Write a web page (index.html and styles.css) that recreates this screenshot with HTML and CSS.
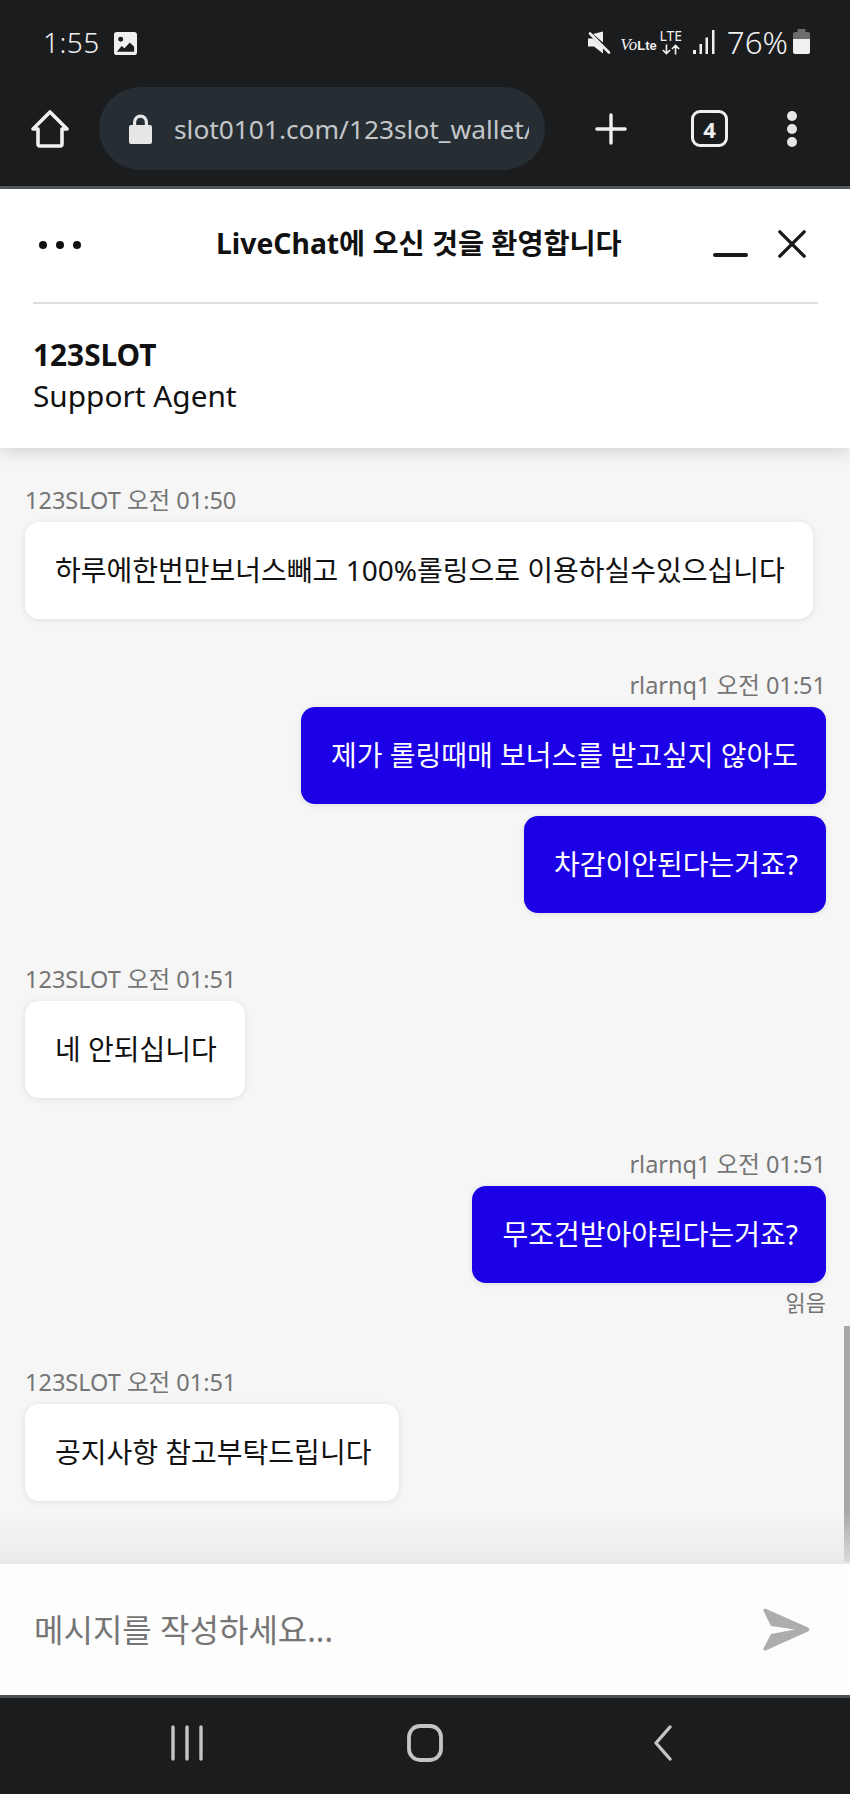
FILE: index.html

```html
<!DOCTYPE html>
<html lang="ko">
<head>
    <meta charset="UTF-8">
    <meta name="viewport" content="width=device-width, initial-scale=1.0">
    <title>LiveChat</title>
    <link rel="stylesheet" href="styles.css">
</head>
<body>
<div class="phone">
    <div class="browser">
        <div class="status-bar">
            <div class="status-left">
                <span class="clock">1:55</span>
                <svg class="icon-picture" viewBox="0 0 24 24"><path fill="#f0f0f0" fill-rule="evenodd" d="M3 0h18a3 3 0 0 1 3 3v18a3 3 0 0 1-3 3H3a3 3 0 0 1-3-3V3a3 3 0 0 1 3-3zM7 5a2.600 2.600 0 1 0 0 5.200A2.600 2.600 0 0 0 7 5zM3 20.500h18v-5l-4.500-4.500-5.500 6-3-2.500z"/></svg>
            </div>
            <div class="status-right">
                <svg class="icon-mute" viewBox="0 0 24 24"><path fill="#f0f0f0" d="M16 1v11L6 3.500 16 1zM1 8h5l10 9v6l-9-7H1z"/><path stroke="#f0f0f0" stroke-width="2.600" stroke-linecap="round" d="M3 3l19 19"/></svg>
                <span class="volte"><i>Vo</i><b>Lte</b></span>
                <span class="lte">
                    <span>LTE</span>
                    <svg viewBox="0 0 22 11"><path fill="none" stroke="#f0f0f0" stroke-width="1.800" d="M6 0v10M2 6l4 4 4-4M16 11V1M12 5l4-4 4 4"/></svg>
                </span>
                <svg class="icon-signal" viewBox="0 0 22 24"><path fill="#f0f0f0" d="M0 20h3v4H0zM6.500 14h2.500v10H6.500zM12.500 7.500H15V24h-2.500zM19 0h2.500v24H19z"/></svg>
                <span class="battery-text">76%</span>
                <svg class="icon-battery" viewBox="0 0 17 25"><path fill="#6d6d6d" d="M5.500 0h6a1 1 0 0 1 1 1v2H15a2 2 0 0 1 2 2v5H0V5a2 2 0 0 1 2-2h2.500V1a1 1 0 0 1 1-1z"/><path fill="#f0f0f0" d="M0 10h17v13a2 2 0 0 1-2 2H2a2 2 0 0 1-2-2z"/></svg>
            </div>
        </div>
        <div class="toolbar">
            <svg class="icon-home" viewBox="0 0 38 38"><path fill="none" stroke="#f0f0f0" stroke-width="3.600" stroke-linejoin="round" d="M2 19L19 2l17 17h-5v15a2 2 0 0 1-2 2H9a2 2 0 0 1-2-2V19z"/></svg>
            <div class="address">
                <svg class="icon-lock" viewBox="0 0 23 30"><path fill="#e6e6e6" d="M4 11V8a7.500 7.500 0 0 1 15 0v3h2a2 2 0 0 1 2 2v15a2 2 0 0 1-2 2H2a2 2 0 0 1-2-2V13a2 2 0 0 1 2-2zm3.200 0h8.600V8a4.300 4.300 0 0 0-8.600 0z"/></svg>
                <span class="url">slot0101.com/123slot_wallet/</span>
            </div>
            <svg class="icon-plus" viewBox="0 0 34 34"><path stroke="#f0f0f0" stroke-width="3.600" stroke-linecap="round" d="M17 2v30M2 17h30"/></svg>
            <span class="tabs">4</span>
            <div class="more-dots"><i></i><i></i><i></i></div>
        </div>
    </div>

    <div class="chat-header">
        <div class="title-row">
            <div class="menu-dots"><i></i><i></i><i></i></div>
            <h1>LiveChat에 오신 것을 환영합니다</h1>
            <div class="window-btns">
                <span class="minimize"></span>
                <svg class="icon-close" viewBox="0 0 30 30"><path stroke="#1a1a1a" stroke-width="3.600" stroke-linecap="round" d="M2 2l26 26M28 2L2 28"/></svg>
            </div>
        </div>
        <div class="agent">
            <strong>123SLOT</strong>
            <span>Support Agent</span>
        </div>
    </div>

    <div class="messages">
        <div class="group">
            <div class="meta">123SLOT 오전 01:50</div>
            <div class="bubble">하루에한번만보너스빼고 100%롤링으로 이용하실수있으십니다</div>
        </div>
        <div class="group mine">
            <div class="meta">rlarnq1 오전 01:51</div>
            <div class="bubble">제가 롤링때매 보너스를 받고싶지 않아도</div>
            <div class="bubble">차감이안된다는거죠?</div>
        </div>
        <div class="group">
            <div class="meta">123SLOT 오전 01:51</div>
            <div class="bubble">네 안되십니다</div>
        </div>
        <div class="group mine">
            <div class="meta">rlarnq1 오전 01:51</div>
            <div class="bubble">무조건받아야된다는거죠?</div>
            <div class="read">읽음</div>
        </div>
        <div class="group">
            <div class="meta">123SLOT 오전 01:51</div>
            <div class="bubble">공지사항 참고부탁드립니다</div>
        </div>
        <div class="scrollbar"></div>
        <div class="fade"></div>
    </div>

    <div class="composer">
        <span class="placeholder">메시지를 작성하세요...</span>
        <svg class="icon-send" viewBox="0 0 48 44"><path fill="#adadad" d="M1.500 3c-.6-1.500.8-2.800 2.200-2.200L46 19.500c1.800.8 1.800 3.200 0 4L3.700 42.500c-1.400.6-2.800-.7-2.200-2.200L9 26l24-4.500L9 18z"/></svg>
    </div>

    <div class="nav-bar">
        <svg class="icon-recent" viewBox="0 0 32 36"><path stroke="#c4c4c4" stroke-width="3.400" stroke-linecap="round" d="M2 2v32M16 2v32M30 2v32"/></svg>
        <svg class="icon-circle" viewBox="0 0 36 38"><rect x="2" y="2" width="32" height="34" rx="11" fill="none" stroke="#c4c4c4" stroke-width="3.800"/></svg>
        <svg class="icon-back" viewBox="0 0 20 36"><path fill="none" stroke="#c4c4c4" stroke-width="3.400" stroke-linecap="round" stroke-linejoin="round" d="M17 2L3 18l14 16"/></svg>
    </div>
</div>
</body>
</html>
```

FILE: styles.css

```css
* {
    box-sizing: border-box;
}

html, body {
    margin: 0;
    padding: 0;
}

body {
    font-family: "Noto Sans", "Noto Sans CJK KR", sans-serif;
    background-color: #f6f6f6;
    color: #111;
}

.phone {
    width: 850px;
    height: 1794px;
    display: flex;
    flex-direction: column;
    overflow: hidden;
}

/* browser chrome */
.browser {
    height: 189px;
    flex: none;
    background-color: #1b1c1e;
    border-bottom: 3px solid #555a5e;
    color: #f0f0f0;
}

.status-bar {
    height: 87px;
    padding: 24px 40px 0 43px;
    display: flex;
    justify-content: space-between;
}

.status-left, .status-right {
    display: flex;
    align-items: flex-start;
}

.clock {
    font-size: 28px;
    line-height: 36px;
    font-weight: 300;
    letter-spacing: 0.5px;
}

.icon-picture {
    width: 23px;
    height: 23px;
    margin: 8px 0 0 14px;
}

.icon-mute {
    width: 24px;
    height: 25px;
    margin-top: 6px;
}

.volte {
    margin: 12px 0 0 9px;
    font-size: 17px;
    line-height: 18px;
    display: flex;
    align-items: baseline;
    font-family: "Liberation Serif", serif;
}

.volte b {
    font-family: "Liberation Sans", sans-serif;
    font-size: 13px;
}

.lte {
    margin: 5px 0 0 2px;
    width: 24px;
    display: flex;
    flex-direction: column;
    align-items: center;
    font-size: 14px;
    line-height: 14px;
}

.lte svg {
    width: 20px;
    height: 11px;
    margin-top: 1px;
}

.icon-signal {
    width: 22px;
    height: 24px;
    margin: 6px 0 0 10px;
}

.battery-text {
    margin-left: 12px;
    font-size: 31.300px;
    line-height: 36px;
    font-weight: 300;
}

.icon-battery {
    width: 17px;
    height: 25px;
    margin: 5px 0 0 5px;
}

.toolbar {
    height: 99px;
    padding: 0 0 16px 31px;
    display: flex;
    align-items: center;
}

.icon-home {
    width: 38px;
    height: 38px;
    flex: none;
}

.address {
    margin-left: 30px;
    width: 446px;
    height: 83px;
    background-color: #262e34;
    border-radius: 42px;
    padding: 0 16px 0 30px;
    display: flex;
    align-items: center;
    overflow: hidden;
}

.icon-lock {
    width: 23px;
    height: 30px;
    flex: none;
}

.url {
    margin-left: 22px;
    font-size: 26.3px;
    color: #c3c7ca;
    white-space: nowrap;
    overflow: hidden;
}

.icon-plus {
    width: 32px;
    height: 32px;
    margin-left: 50px;
    flex: none;
}

.tabs {
    width: 37px;
    height: 37px;
    margin-left: 64px;
    flex: none;
    border: 3px solid #f0f0f0;
    border-radius: 9px;
    font-size: 22px;
    font-weight: 700;
    display: flex;
    align-items: center;
    justify-content: center;
}

.more-dots {
    margin-left: 59px;
    display: flex;
    flex-direction: column;
    gap: 3px;
}

.more-dots i {
    width: 10px;
    height: 10px;
    border-radius: 50%;
    background-color: #e6e6e6;
}

/* chat header */
.chat-header {
    height: 259px;
    flex: none;
    padding: 0 32px 0 33px;
    background-color: #fff;
    box-shadow: 0 4px 16px rgba(0, 0, 0, 0.14);
    position: relative;
    z-index: 2;
}

.title-row {
    height: 115px;
    padding-bottom: 2px;
    border-bottom: 2px solid #dedede;
    display: flex;
    align-items: center;
    position: relative;
}

.menu-dots {
    display: flex;
    gap: 9px;
    margin-left: 6px;
}

.menu-dots i {
    width: 8px;
    height: 8px;
    border-radius: 50%;
    background-color: #111;
}

h1 {
    position: absolute;
    left: 183px;
    top: 36px;
    margin: 0;
    font-size: 28.3px;
    line-height: 36px;
    font-weight: 700;
    white-space: nowrap;
}

.window-btns {
    margin-left: auto;
    margin-right: 12px;
    display: flex;
    align-items: center;
}

.minimize {
    width: 35px;
    height: 4px;
    border-radius: 2px;
    background-color: #1a1a1a;
    margin-top: 20px;
}

.icon-close {
    width: 28px;
    height: 28px;
    margin-left: 30px;
    margin-top: -2px;
}

.agent {
    padding-top: 30px;
    display: flex;
    flex-direction: column;
    font-size: 29.8px;
    line-height: 41px;
}

.agent strong {
    font-weight: 700;
}

/* messages */
.messages {
    flex: 1;
    min-height: 0;
    position: relative;
    padding: 34px 24px 0 25px;
    background-color: #f6f6f6;
    overflow: hidden;
}

.group {
    display: flex;
    flex-direction: column;
    align-items: flex-start;
    margin-bottom: 48px;
}

.group.mine {
    align-items: flex-end;
}

.meta {
    font-size: 23.5px;
    line-height: 36px;
    color: #757575;
    margin-bottom: 4px;
}

.bubble {
    padding: 29px 28px 29px 30px;
    min-height: 97px;
    font-size: 28px;
    line-height: 39px;
    background-color: #fff;
    border-radius: 14px;
    box-shadow: 0 1px 6px rgba(0, 0, 0, 0.1);
}

.mine .bubble {
    background-color: #1c00e6;
    color: #fff;
}

.mine .bubble + .bubble {
    margin-top: 12px;
}

.read {
    margin-top: 1px;
    font-size: 22px;
    line-height: 36px;
    color: #757575;
    margin-bottom: -4px;
}

.scrollbar {
    position: absolute;
    right: 0;
    bottom: 0;
    width: 6px;
    height: 236px;
    background-color: #a8a8a8;
}

.fade {
    position: absolute;
    left: 0;
    right: 0;
    bottom: 0;
    height: 50px;
    background: linear-gradient(rgba(232, 232, 232, 0), rgba(232, 232, 232, 0.8));
}

/* input */
.composer {
    height: 133px;
    flex: none;
    padding: 0 40px 0 34px;
    background-color: #fdfdfd;
    border-top: 2px solid #e8e8e8;
    display: flex;
    align-items: center;
    justify-content: space-between;
}

.placeholder {
    font-size: 32px;
    line-height: 44px;
    color: #757575;
}

.icon-send {
    width: 48px;
    height: 44px;
}

/* android nav */
.nav-bar {
    height: 99px;
    flex: none;
    padding-bottom: 6px;
    background-color: #1b1c1e;
    border-top: 3px solid #4a4f53;
    display: flex;
    align-items: center;
}

.icon-recent {
    width: 32px;
    height: 36px;
    margin-left: 171px;
}

.icon-circle {
    width: 36px;
    height: 38px;
    margin-left: 204px;
}

.icon-back {
    width: 20px;
    height: 36px;
    margin-left: 210px;
}
```
